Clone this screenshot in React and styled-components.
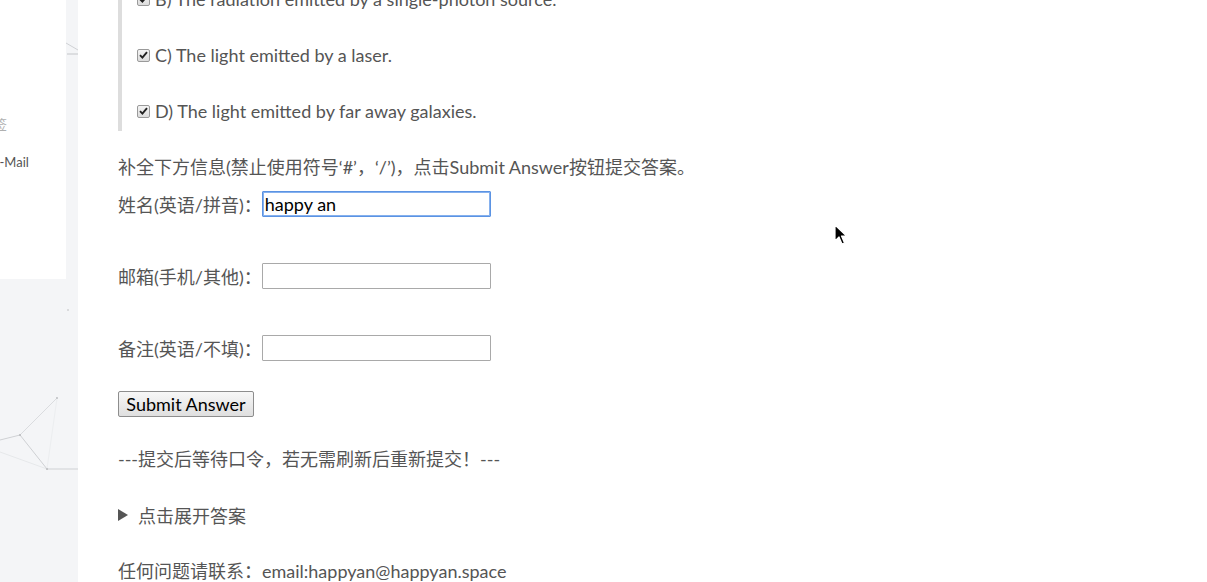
import React from "react";
import styled, { createGlobalStyle } from "styled-components";

const Global = createGlobalStyle`
  html, body { margin: 0; padding: 0; background: #fff; }
  body { font-family: Lato, "Noto Sans CJK SC", sans-serif; overflow: hidden; }
  * { box-sizing: border-box; }
`;

const Page = styled.div`
  display: flex;
  align-items: flex-start;
  width: 1207px;
  height: 582px;
  overflow: hidden;
  position: relative;
`;

const Sidebar = styled.aside`
  position: relative;
  flex: 0 0 78px;
  height: 582px;
  background: #f4f5f7;
`;

const SideCard = styled.div`
  width: 66px;
  height: 279px;
  background: #fff;
  overflow: hidden;
  padding-top: 116px;
  display: flex;
  flex-direction: column;
  gap: 22px;
`;

const SideItem = styled.div`
  margin-left: ${(p) => p.$shift}px;
  font-size: 13px;
  line-height: 16px;
  white-space: nowrap;
  color: ${(p) => (p.$muted ? "#b0b0b0" : "#555")};
`;

const Net = styled.svg`
  position: absolute;
  left: 0;
  top: 0;
  pointer-events: none;
`;

const Main = styled.main`
  flex: 1;
  padding-left: 40px;
  margin-top: -15px;
  display: flex;
  flex-direction: column;
  align-items: flex-start;
  color: #555;
  font-size: 18px;
  & > * { flex-shrink: 0; }
`;

const Quote = styled.blockquote`
  margin: 0;
  border-left: 4px solid #dddddd;
  padding: 0 0 6px 15px;
  display: flex;
  flex-direction: column;
  gap: 28px;
`;

const Option = styled.div`
  display: flex;
  align-items: center;
  height: 28px;
  white-space: nowrap;
`;

const Box = styled.span`
  width: 13px;
  height: 13px;
  margin-right: 5px;
  border: 1px solid #9a9a9a;
  border-radius: 2px;
  background: linear-gradient(#f4f4f4, #dcdcdc);
  display: inline-flex;
  align-items: center;
  justify-content: center;
`;

const Line = styled.div`
  height: 28px;
  line-height: 28px;
  margin-top: ${(p) => p.$top || 0}px;
  white-space: nowrap;
`;

const FormRow = styled.div`
  display: flex;
  align-items: center;
  height: 28px;
  margin-top: ${(p) => p.$top || 0}px;
  white-space: nowrap;
`;

const Field = styled.input`
  width: 229px;
  height: 26px;
  margin: 0;
  padding: 0 2px;
  font: 18px Lato, "Noto Sans CJK SC", sans-serif;
  color: #000;
  background: #fff;
  border: 1px solid ${(p) => (p.$focus ? "#5b93e3" : "#a9a9a9")};
  box-shadow: ${(p) => (p.$focus ? "inset 0 0 0 1px #86b1ee" : "none")};
  border-radius: 1px;
  outline: none;
`;

const SubmitButton = styled.button`
  margin-top: ${(p) => p.$top}px;
  height: 26px;
  width: 136px;
  padding: 0;
  font: 18px Lato, "Noto Sans CJK SC", sans-serif;
  color: #000;
  background: linear-gradient(#f7f7f7, #dfdfdf);
  border: 1px solid #8d8d8d;
  border-radius: 2px;
`;

const Summary = styled.div`
  display: flex;
  align-items: center;
  height: 28px;
  margin-top: ${(p) => p.$top}px;
  white-space: nowrap;
`;

const Triangle = styled.span`
  width: 0;
  height: 0;
  border-top: 6px solid transparent;
  border-bottom: 6px solid transparent;
  border-left: 10px solid #555;
  margin-right: 10px;
`;

const Cursor = styled.svg`
  position: absolute;
  left: 834px;
  top: 224px;
`;

const Check = () => (
  <svg width="9" height="8" viewBox="0 0 9 8">
    <path d="M1 4.2 L3.4 6.6 L8 1.2" fill="none" stroke="#222" strokeWidth="1.9" />
  </svg>
);

const options = [
  "B) The radiation emitted by a single-photon source.",
  "C) The light emitted by a laser.",
  "D) The light emitted by far away galaxies.",
];

export default function App() {
  return (
    <>
      <Global />
      <Page>
        <Sidebar>
          <SideCard>
            <SideItem $shift={-19} $muted>标签</SideItem>
            <SideItem $shift={-8}>E-Mail</SideItem>
          </SideCard>
          <Net width="78" height="582" viewBox="0 0 78 582">
            <g stroke="#cfd1d4" strokeWidth="1" fill="none">
              <path d="M66 43 L78 50" />
              <path d="M67 54 L78 54" stroke="#c4c6c9" />
              <path d="M57 398 L20 435" stroke="#dadcdf" />
              <path d="M20 435 L47 469" />
              <path d="M47 469 L78 469" />
              <path d="M0 440 L20 435" />
              <path d="M0 452 L47 469" stroke="#e6e8ea" />
              <path d="M57 398 L47 469" stroke="#eceef0" />
            </g>
            <g fill="#b8babd">
              <circle cx="68" cy="310" r="0.8" />
              <circle cx="57" cy="398" r="0.9" />
              <circle cx="20" cy="435" r="1" />
              <circle cx="47" cy="469" r="1" />
            </g>
          </Net>
        </Sidebar>
        <Main>
          <Quote>
            {options.map((o) => (
              <Option key={o}>
                <Box>
                  <Check />
                </Box>
                {o}
              </Option>
            ))}
          </Quote>
          <Line $top={22}>补全下方信息(禁止使用符号‘#’，‘/’)，点击Submit Answer按钮提交答案。</Line>
          <FormRow $top={9}>
            姓名(英语/拼音)：<Field $focus defaultValue="happy an" />
          </FormRow>
          <FormRow $top={44}>
            邮箱(手机/其他)：<Field />
          </FormRow>
          <FormRow $top={44}>
            备注(英语/不填)：<Field />
          </FormRow>
          <SubmitButton $top={29}>Submit Answer</SubmitButton>
          <Line $top={28}>---提交后等待口令，若无需刷新后重新提交！---</Line>
          <Summary $top={28}>
            <Triangle />
            点击展开答案
          </Summary>
          <Line $top={28}>任何问题请联系：email:happyan@happyan.space</Line>
        </Main>
        <Cursor width="14" height="22" viewBox="0 0 14 22">
          <path d="M1 1 L1 17 L5 13 L8 20 L10.5 19 L7.5 12 L12.5 12 Z" fill="#000" stroke="#fff" strokeWidth="1.2" strokeLinejoin="round" />
        </Cursor>
      </Page>
    </>
  );
}
